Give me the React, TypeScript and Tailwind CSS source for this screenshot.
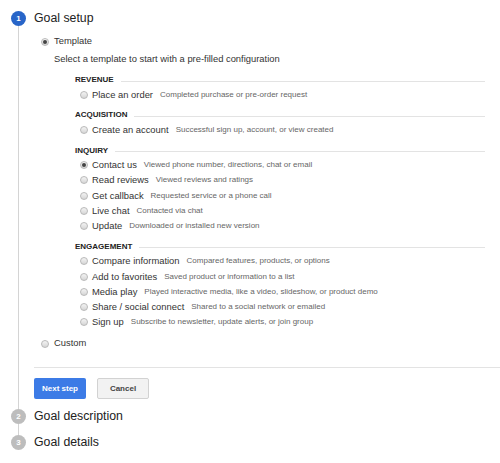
import React from 'react';

type Item = { label: string; desc: string; checked?: boolean };
type Section = { title: string; items: Item[] };

const SECTIONS: Section[] = [
  { title: 'REVENUE', items: [{ label: 'Place an order', desc: 'Completed purchase or pre-order request' }] },
  { title: 'ACQUISITION', items: [{ label: 'Create an account', desc: 'Successful sign up, account, or view created' }] },
  {
    title: 'INQUIRY',
    items: [
      { label: 'Contact us', desc: 'Viewed phone number, directions, chat or email', checked: true },
      { label: 'Read reviews', desc: 'Viewed reviews and ratings' },
      { label: 'Get callback', desc: 'Requested service or a phone call' },
      { label: 'Live chat', desc: 'Contacted via chat' },
      { label: 'Update', desc: 'Downloaded or installed new version' },
    ],
  },
  {
    title: 'ENGAGEMENT',
    items: [
      { label: 'Compare information', desc: 'Compared features, products, or options' },
      { label: 'Add to favorites', desc: 'Saved product or information to a list' },
      { label: 'Media play', desc: 'Played interactive media, like a video, slideshow, or product demo' },
      { label: 'Share / social connect', desc: 'Shared to a social network or emailed' },
      { label: 'Sign up', desc: 'Subscribe to newsletter, update alerts, or join group' },
    ],
  },
];

function Radio({ checked }: { checked?: boolean }) {
  return (
    <span className="grid h-[8px] w-[8px] shrink-0 place-items-center rounded-full border border-[#b9b9b9] bg-gradient-to-b from-[#f4f4f4] to-[#d6d6d6]">
      {checked && <span className="h-[4px] w-[4px] rounded-full bg-[#444]" />}
    </span>
  );
}

function StepDot({ n, active }: { n: number; active?: boolean }) {
  return (
    <span
      className={
        active
          ? 'grid h-[15px] w-[15px] shrink-0 place-items-center rounded-full bg-[#2865c8] text-[8px] font-bold text-white'
          : 'grid h-[15px] w-[15px] shrink-0 place-items-center rounded-full bg-[#bdbdbd] text-[8px] font-bold text-white'
      }
    >
      {n}
    </span>
  );
}

export default function App() {
  return (
    <div
      className="h-[463px] w-[500px] overflow-hidden bg-white pt-[11px] text-[#222]"
      style={{ fontFamily: '"Liberation Sans", Arial, sans-serif' }}
    >
      {/* Step 1 */}
      <div className="flex">
        <div className="ml-[11px] flex w-[15px] flex-col items-center">
          <StepDot n={1} active />
          <span className="w-px flex-1 bg-[#d4d4d4]" />
        </div>
        <div className="ml-[8px] flex-1 pb-[10px]">
          <div className="flex h-[15px] items-center text-[12.3px] leading-none">Goal setup</div>

          <div className="ml-[7px] mt-[8px] flex h-[15px] items-center gap-[5px] text-[9.4px] text-[#333]">
            <Radio checked />
            Template
          </div>
          <div className="ml-[20px] mt-[3px] flex h-[15px] items-center text-[9.4px] text-[#333]">
            Select a template to start with a pre-filled configuration
          </div>

          <div className="ml-[41px] mr-[15px] mt-[6px] flex flex-col gap-[6px]">
            {SECTIONS.map((s) => (
              <div key={s.title}>
                <div className="flex h-[14px] items-center gap-[7px]">
                  <span className="text-[8px] font-bold text-[#222]">{s.title}</span>
                  <span className="mt-[2px] h-px flex-1 bg-[#e3e3e3]" />
                </div>
                {s.items.map((it) => (
                  <div key={it.label} className="ml-[5px] flex h-[15.25px] items-center">
                    <Radio checked={it.checked} />
                    <span className="ml-[4px] text-[9.4px] text-[#333]">{it.label}</span>
                    <span className="ml-[7px] text-[8px] text-[#666]">{it.desc}</span>
                  </div>
                ))}
              </div>
            ))}
          </div>

          <div className="ml-[7px] mt-[6px] flex h-[15px] items-center gap-[5px] text-[9.4px] text-[#333]">
            <Radio />
            Custom
          </div>

          <div className="mt-[16px] border-t border-[#e3e3e3]" />

          <div className="mt-[10px] flex gap-[11px]">
            <button className="h-[21px] w-[52px] rounded-[2px] bg-[#3c7be6] text-[8px] font-bold text-white">
              Next step
            </button>
            <button className="h-[21px] w-[52px] rounded-[2px] border border-[#d2d2d2] bg-[#f2f2f2] text-[8px] font-bold text-[#444]">
              Cancel
            </button>
          </div>
        </div>
      </div>

      {/* Step 2 */}
      <div className="flex h-[26px]">
        <div className="ml-[11px] flex w-[15px] flex-col items-center">
          <StepDot n={2} />
          <span className="w-px flex-1 bg-[#d4d4d4]" />
        </div>
        <div className="ml-[8px] flex h-[15px] items-center text-[12.3px] leading-none">Goal description</div>
      </div>

      {/* Step 3 */}
      <div className="flex">
        <div className="ml-[11px] flex w-[15px] flex-col items-center">
          <StepDot n={3} />
        </div>
        <div className="ml-[8px] flex h-[15px] items-center text-[12.3px] leading-none">Goal details</div>
      </div>
    </div>
  );
}
